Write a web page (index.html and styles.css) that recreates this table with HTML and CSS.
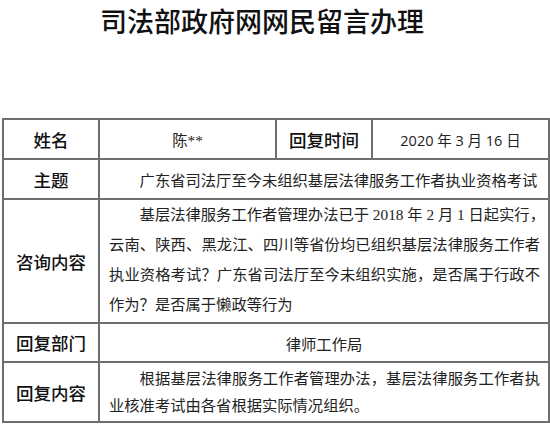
FILE: index.html
```html
<!DOCTYPE html>
<html lang="zh-CN">
<head>
<meta charset="utf-8">
<title>司法部政府网网民留言办理</title>
<link rel="stylesheet" href="styles.css">
</head>
<body>
<div class="page">
  <h1 class="title">司法部政府网网民留言办理</h1>
  <table class="sheet">
    <colgroup>
      <col class="c-label"><col class="c-value"><col class="c-label"><col class="c-value">
    </colgroup>
    <tr class="r-short">
      <th>姓名</th>
      <td class="cell-center">陈**</td>
      <th>回复时间</th>
      <td class="cell-center cell-date">2020 年 3 月 16 日</td>
    </tr>
    <tr class="r-short">
      <th>主题</th>
      <td colspan="3" class="cell-text"><span class="ln first last">广东省司法厅至今未组织基层法律服务工作者执业资格考试</span></td>
    </tr>
    <tr class="r-long">
      <th>咨询内容</th>
      <td colspan="3" class="cell-text cell-para">
        <span class="ln first">基层法律服务工作者管理办法已于 2018 年 2 月 1 日起实行，</span>
        <span class="ln">云南、陕西、黑龙江、四川等省份均已组织基层法律服务工作者</span>
        <span class="ln">执业资格考试？广东省司法厅至今未组织实施，是否属于行政不</span>
        <span class="ln last">作为？是否属于懒政等行为</span>
      </td>
    </tr>
    <tr class="r-dept">
      <th>回复部门</th>
      <td colspan="3" class="cell-center">律师工作局</td>
    </tr>
    <tr class="r-reply">
      <th>回复内容</th>
      <td colspan="3" class="cell-text cell-reply">
        <span class="ln first">根据基层法律服务工作者管理办法，基层法律服务工作者执</span>
        <span class="ln last">业核准考试由各省根据实际情况组织。</span>
      </td>
    </tr>
  </table>
</div>
</body>
</html>
```

FILE: styles.css
```css
html, body {
  margin: 0;
  padding: 0;
  background: #fff;
}

.page {
  width: 550px;
  height: 424px;
  padding: 0 2px;
  box-sizing: border-box;
  overflow: hidden;
}

.title {
  margin: 0;
  height: 118px;
  padding: 4px 26px 0 0;
  box-sizing: border-box;
  text-align: center;
  font-family: "Noto Sans CJK SC", sans-serif;
  font-weight: 500;
  font-size: 27px;
  line-height: 34px;
  color: #111;
}

.sheet {
  width: 546px;
  border-collapse: collapse;
  table-layout: fixed;
}

.c-label { width: 96px; }
.c-value { width: 177px; }

.sheet th,
.sheet td {
  border: 2px solid #6e6e6e;
  padding: 0;
  vertical-align: middle;
}

.sheet th {
  font-family: "Noto Sans CJK SC", sans-serif;
  font-weight: 500;
  font-size: 17.5px;
  color: #111;
  text-align: center;
}

.sheet td {
  font-family: "Liberation Serif", "Noto Sans CJK SC", serif;
  font-size: 15.3px;
  color: #222;
}

.sheet .cell-center { text-align: center; }

.sheet .cell-date {
  font-family: "Open Sans", "Noto Sans CJK SC", sans-serif;
  font-size: 14.5px;
}

.sheet .cell-text {
  padding: 0 8px 0 9px;
}

.ln {
  display: block;
  text-align: justify;
  text-align-last: justify;
  white-space: nowrap;
}

.ln.first { text-indent: 2em; }
.ln.last { text-align-last: left; }

.sheet .cell-para { line-height: 30px; padding-bottom: 2px; }
.sheet .cell-reply { line-height: 27px; }

.r-short { height: 40px; }
.r-long { height: 122px; }
.r-dept { height: 39px; }
.r-reply { height: 60px; }
```
